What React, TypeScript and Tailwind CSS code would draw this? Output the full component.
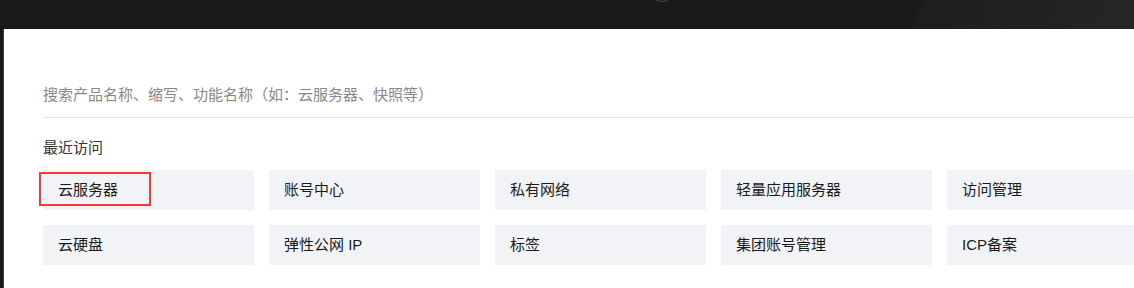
const recent = [
  "云服务器",
  "账号中心",
  "私有网络",
  "轻量应用服务器",
  "访问管理",
  "云硬盘",
  "弹性公网 IP",
  "标签",
  "集团账号管理",
  "ICP备案",
];

function TopBar() {
  return (
    <div className="relative h-[29px] shrink-0 overflow-hidden bg-[linear-gradient(115deg,#191919_0%,#191919_80%,#1d1e1e_81%,#262626_100%)]">
      {/* avatar edge peeking from above */}
      <div className="absolute left-[650px] top-[-22px] h-[24px] w-[24px] rounded-full border border-[#4a4a4a]" />
    </div>
  );
}

export default function App() {
  return (
    <div
      className="flex h-[288px] w-[1134px] flex-col overflow-hidden bg-[#191919]"
      style={{ fontFamily: '"Liberation Sans", "Noto Sans CJK SC", sans-serif' }}
    >
      <TopBar />
      <div className="ml-[3px] flex-1 overflow-hidden border-l border-[#3c3c3c] bg-white pl-[39px] pt-[45px]">
        <div className="flex h-[44px] items-center border-b border-[#e5e6eb] text-[15px] text-[#888888]">
          搜索产品名称、缩写、功能名称（如：云服务器、快照等）
        </div>
        <div className="mt-[20px] text-[15px] leading-[20px] text-[#333333]">最近访问</div>
        <div className="mt-[12px] grid w-[1115px] grid-cols-[repeat(5,211px)] gap-[15px]">
          {recent.map((name, i) => (
            <div
              key={name}
              className="relative flex h-[40px] items-center bg-[#f2f3f7] pl-[15px] text-[15px] text-[#1a1a1a]"
            >
              {name}
              {i === 0 && (
                <div className="absolute left-[-4px] top-[2px] h-[34px] w-[112px] border-2 border-[#ff3535]" />
              )}
            </div>
          ))}
        </div>
      </div>
    </div>
  );
}
